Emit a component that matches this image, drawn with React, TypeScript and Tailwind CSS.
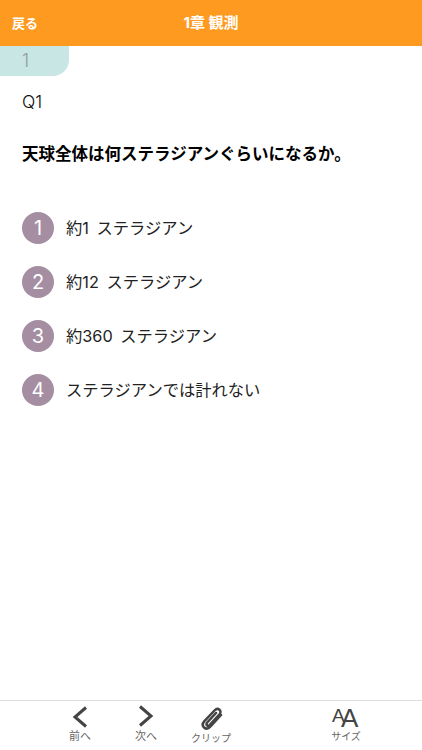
import React from 'react';

const FONT = "font-['Inter','Noto_Sans_CJK_JP',sans-serif]";

const choices = ['約1 ステラジアン', '約12 ステラジアン', '約360 ステラジアン', 'ステラジアンでは計れない'];

const App: React.FC = () => {
  return (
    <div className={`${FONT} w-[422px] h-[750px] flex flex-col bg-white text-black overflow-hidden`}>
      <header className="h-[46px] shrink-0 bg-[#ff9a20] flex items-center relative text-white font-bold pt-[1px]">
        <span className="pl-[12px] text-[13px]">戻る</span>
        <span className="absolute left-0 right-0 text-center text-[15px]">1章 観測</span>
      </header>

      <main className="flex-1 flex flex-col">
        <div className="w-[69px] h-[30px] bg-[#c8e6e4] rounded-br-[16px] pl-[22px] text-[18px] font-light leading-[30px] text-[#8f9c9c]">1</div>
        <div className="pl-[22px] mt-[16px] text-[17.500px] font-light leading-[20px] text-[#111]">Q1</div>
        <div className="pl-[22px] mt-[32px] text-[16.500px] leading-[20px] font-bold">天球全体は何ステラジアンぐらいになるか。</div>

        <ul className="pl-[22px] mt-[48px] flex flex-col gap-[22px]">
          {choices.map((c, i) => (
            <li key={c} className="flex items-center gap-[12px]">
              <span className="w-[32px] h-[32px] rounded-full bg-[#a58ea2] text-white text-[20px] font-normal flex items-center justify-center">{i + 1}</span>
              <span className="text-[16.300px] [word-spacing:3px] text-[#222]">{c}</span>
            </li>
          ))}
        </ul>
      </main>

      <footer className="h-[50px] shrink-0 border-t border-[#dedede] relative text-[10px] text-[#666]">
        <div className="flex h-full">
          <div className="ml-[65px] w-[30px] flex flex-col items-center pt-[5px]">
            <svg width="16" height="22" viewBox="0 0 16 22" fill="none" stroke="#444" strokeWidth="3">
              <path d="M14 1.500 3 11l11 9.500" />
            </svg>
            <span className="leading-[12px] mt-[2px] text-[11px]">前へ</span>
          </div>
          <div className="ml-[36px] w-[30px] flex flex-col items-center pt-[4px]">
            <svg width="16" height="22" viewBox="0 0 16 22" fill="none" stroke="#444" strokeWidth="3">
              <path d="M2 1.500 13 11 2 20.500" />
            </svg>
            <span className="leading-[12px] mt-[3px] text-[11px]">次へ</span>
          </div>
          <div className="ml-[30px] w-[40px] flex flex-col items-center pt-[6px]">
            <svg className="ml-[2px]" width="24" height="24" viewBox="0 0 24 24" fill="none" stroke="#444" strokeWidth="2.500" strokeLinecap="round">
              <path d="M21 8 10.500 19.500c-2 2.200-4.600 2.600-6.400 1-1.800-1.600-1.600-4.200.3-6.400L14.500 3.500c1.500-1.600 3.600-2 5-.8 1.400 1.200 1.300 3.200-.2 4.900L9.800 17.800c-.9 1-2 1.200-2.800.5-.8-.7-.7-1.800.2-2.800L16 6" />
            </svg>
            <span className="leading-[12px] mt-[1px]">クリップ</span>
          </div>
          <div className="ml-[98px] w-[34px] flex flex-col items-center pt-[4px]">
            <div className="relative w-[28px] h-[24px] text-[#444] font-['Liberation_Sans',sans-serif]">
              <span className="absolute left-0 top-[3px] text-[19px] leading-[16px]">A</span>
              <span className="absolute left-[9px] top-[3px] text-[26px] leading-[21px]">A</span>
            </div>
            <span className="leading-[12px] mt-[1px]">サイズ</span>
          </div>
        </div>
      </footer>
    </div>
  );
};

export default App;
